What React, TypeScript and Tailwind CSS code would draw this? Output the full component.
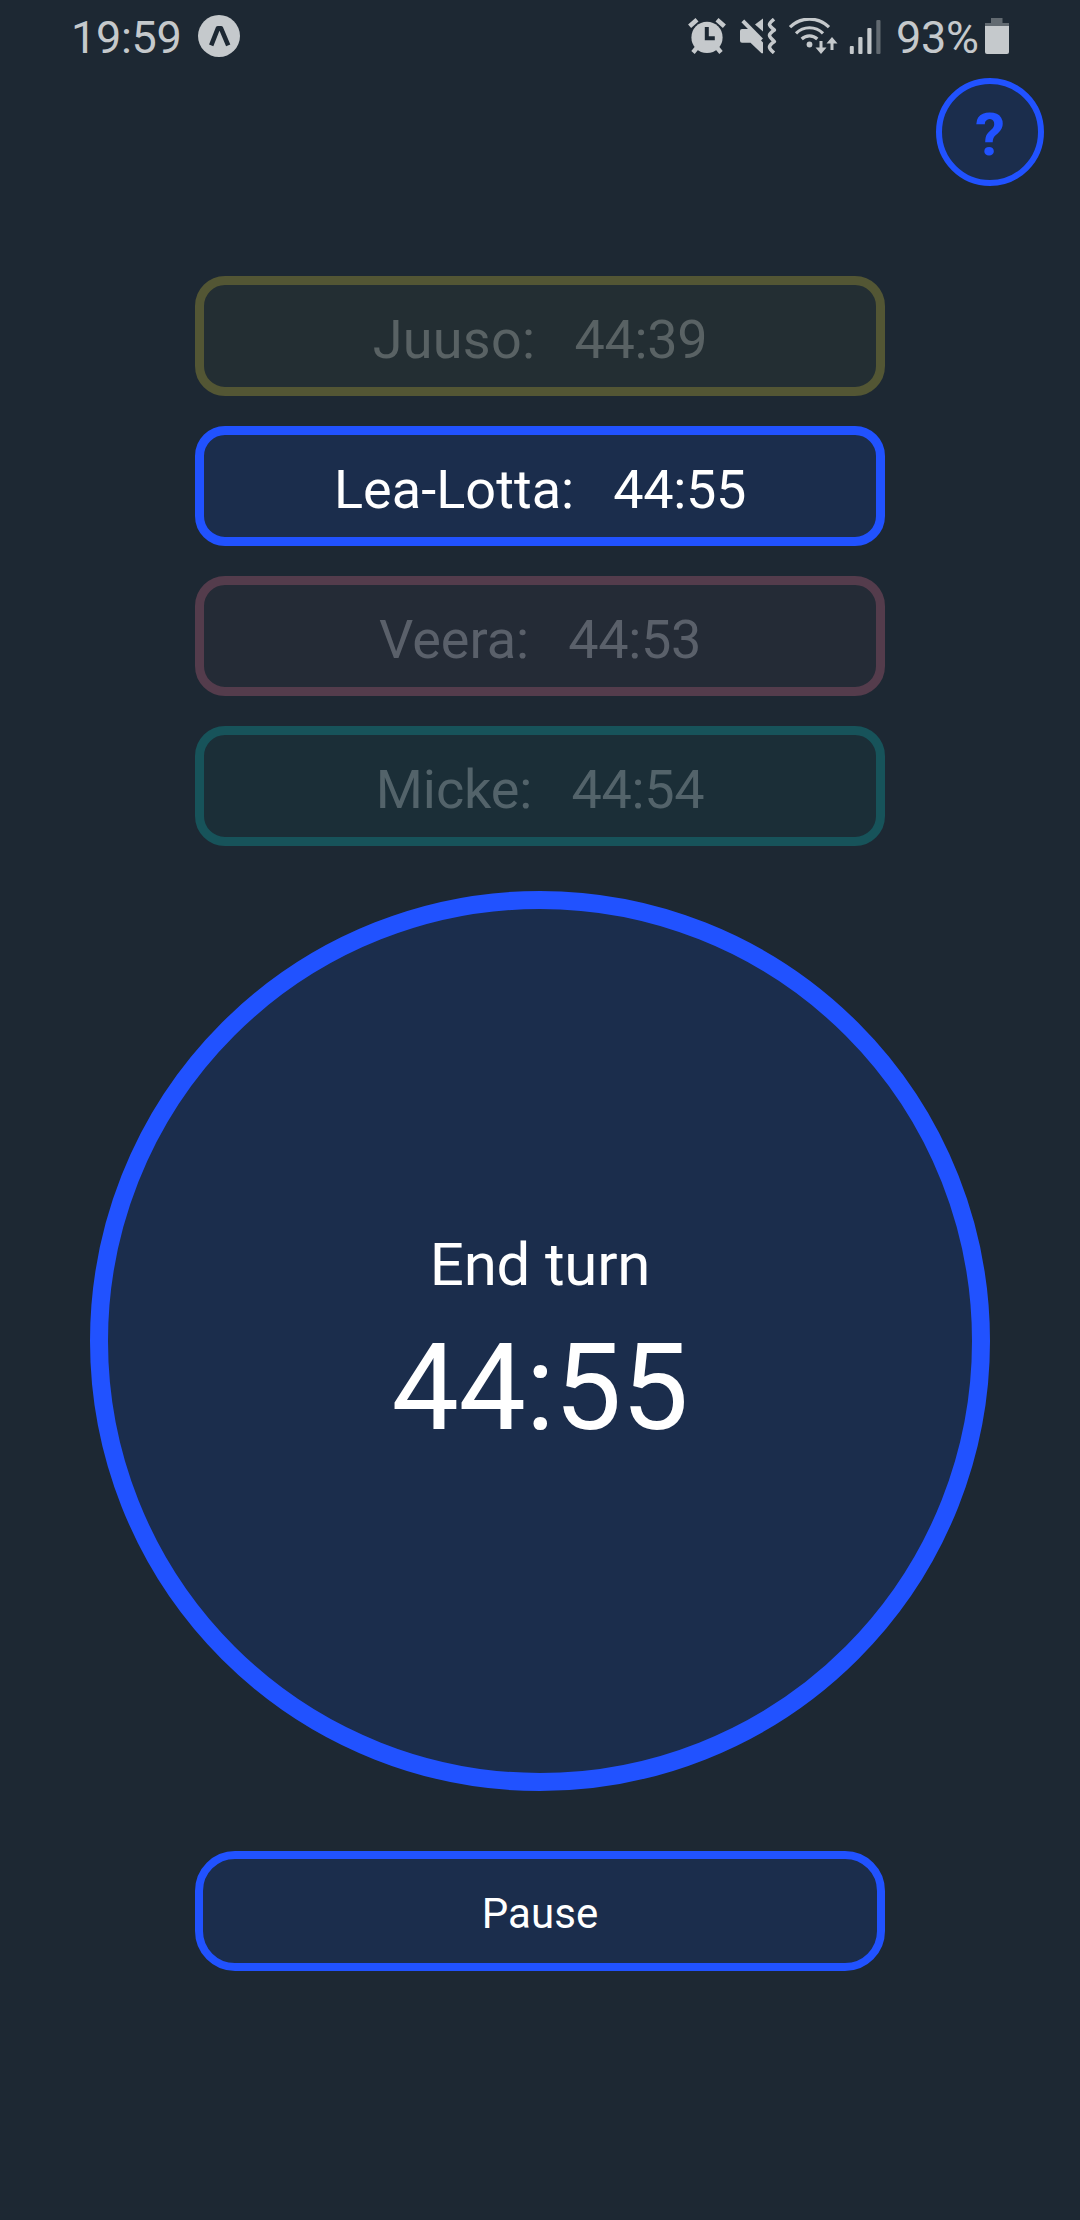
const players = [
  { name: 'Juuso', time: '44:39', style: 'border-[#535634] bg-[#232e33] text-[#596264]', tracking: 'tracking-[0.25px]' },
  { name: 'Lea-Lotta', time: '44:55', style: 'border-[#2152ff] bg-[#1b2d4c] text-white', tracking: 'tracking-[0.06px]' },
  { name: 'Veera', time: '44:53', style: 'border-[#543c4c] bg-[#242b36] text-[#5a606a]', tracking: 'tracking-normal' },
  { name: 'Micke', time: '44:54', style: 'border-[#17535a] bg-[#1b2e37] text-[#53636a]', tracking: 'tracking-[-0.1px]' },
];

function ExpoIcon() {
  return (
    <svg className="ml-[17px] h-[42px] w-[42px]" viewBox="0 0 42 42">
      <circle cx="21" cy="21" r="21" fill="#c5c9cc" />
      <path d="M13.2 30.3 20 13.2h2.9L30.2 30.3" fill="none" stroke="#1d2833" strokeWidth="4.6" strokeLinejoin="round" />
    </svg>
  );
}

function AlarmIcon() {
  return (
    <svg className="h-9 w-[38px]" viewBox="688 18 38 36">
      <circle cx="707" cy="37.4" r="15.6" fill="#c5c9cc" />
      <g stroke="#c5c9cc" strokeWidth="4.6" fill="none">
        <path d="M689.6 26.2 697 19.8M724.4 26.2 717 19.8" />
        <path d="M697.5 47 693 52.5M716.5 47 721 52.5" strokeWidth="4.4" />
      </g>
      <path d="M706.8 27v11.2h8" fill="none" stroke="#1d2833" strokeWidth="4" />
    </svg>
  );
}

function MuteVibrateIcon() {
  return (
    <svg className="ml-[14px] h-9 w-[37px]" viewBox="740 18 37 36">
      <path d="M742 29h8l13 13.5V53.3h-1.5L750.5 42.7H742q-2 0-2-2V31q0-2 2-2Z" fill="#c5c9cc" />
      <path d="M763 18.5V31.5L755 24.5Z" fill="#c5c9cc" />
      <path d="M742.8 20.8 761.5 40" stroke="#c5c9cc" strokeWidth="4" />
      <path d="M774 19.2Q769.5 23 769.5 24.5T774.3 30Q769.5 33.5 769.5 35.3T774.3 41.5Q769.5 45 769.5 47T774 52.8" fill="none" stroke="#c5c9cc" strokeWidth="3.6" strokeLinejoin="round" />
    </svg>
  );
}

function WifiIcon() {
  return (
    <svg className="ml-[11px] h-9 w-[50px]" viewBox="788 18 50 36">
      <g fill="none" stroke="#c5c9cc" strokeWidth="3.2">
        <path d="M790 27.2A27.5 27.5 0 0 1 829 27.2" />
        <path d="M796 33.3A19.2 19.2 0 0 1 823 33.3" />
        <path d="M801.7 39A11.3 11.3 0 0 1 817.3 39" />
        <path d="M821 41V50M832 50V41" strokeWidth="3" />
      </g>
      <circle cx="809.5" cy="44.5" r="2.9" fill="#c5c9cc" />
      <path d="M815.5 47.5h11L821 54ZM826.5 43.5h11L832 37Z" fill="#c5c9cc" />
    </svg>
  );
}

function SignalIcon() {
  return (
    <svg className="ml-[11px] h-9 w-8" viewBox="849 18 32 36">
      <g fill="#c5c9cc">
        <rect x="849.8" y="46" width="4" height="8" rx="1" />
        <rect x="858.3" y="37" width="4.2" height="17" rx="1" />
        <rect x="867.3" y="28" width="4.2" height="26" rx="1" />
        <rect x="876.3" y="20" width="4.2" height="34" rx="1" fill="#626a71" />
      </g>
    </svg>
  );
}

function BatteryIcon() {
  return (
    <svg className="h-9 w-6" viewBox="985 18 24 36">
      <path d="M991 18h11.5v5H1009v3H985v-3h6Z" fill="#626a71" />
      <path d="M985 26h24v26q0 2-2 2h-20q-2 0-2-2Z" fill="#c5c9cc" />
    </svg>
  );
}

export default function App() {
  return (
    <main className="flex h-[2220px] w-[1080px] flex-col items-center overflow-hidden bg-[#1d2833] font-[Roboto,sans-serif] text-white">
      <header className="flex h-[72px] w-full items-center justify-between px-[71px] text-[45px] leading-none tracking-[-0.3px] text-[#c5c9cc]">
        <div className="flex items-center">
          <span className="w-[110px] pt-[3px] whitespace-nowrap">19:59</span>
          <ExpoIcon />
        </div>
        <div className="flex items-center">
          <AlarmIcon />
          <MuteVibrateIcon />
          <WifiIcon />
          <SignalIcon />
          <span className="ml-[15px] w-[89px] pt-[3px] whitespace-nowrap">93%</span>
          <BatteryIcon />
        </div>
      </header>

      <button className="mt-1.5 mr-9 flex size-[108px] shrink-0 items-center justify-center self-end rounded-full border-[6px] border-[#2152ff] bg-[#1b2d4c] pt-[5px] text-[60px] leading-none font-bold text-[#2152ff]">
        ?
      </button>

      <section className="mt-[90px] flex w-[690px] flex-col gap-[30px]">
        {players.map((p) => (
          <div
            key={p.name}
            className={`flex h-[120px] items-center justify-center rounded-[30px] border-[9px] pt-[7px] text-[54px] leading-none whitespace-pre ${p.style}`}
          >
            <span className={p.tracking}>{`${p.name}:`}</span>
            <span className="tracking-[-0.35px]">{`   ${p.time}`}</span>
          </div>
        ))}
      </section>

      <button className="mt-[45px] flex size-[900px] shrink-0 flex-col items-center justify-center rounded-full border-[18px] border-[#2152ff] bg-[#1b2d4c]">
        <span className="pt-[7px] text-[60px] leading-[72px] tracking-[-0.2px]">End turn</span>
        <span className="pt-[17.5px] pb-[2.5px] text-[120px] leading-[140px] tracking-[-0.4px]">44:55</span>
      </button>

      <button className="mt-[60px] flex h-[120px] w-[690px] shrink-0 items-center justify-center rounded-[40px] border-8 border-[#2152ff] bg-[#1b2d4c] pt-[5px] text-[42px] leading-none tracking-[0.1px]">
        Pause
      </button>
    </main>
  );
}
